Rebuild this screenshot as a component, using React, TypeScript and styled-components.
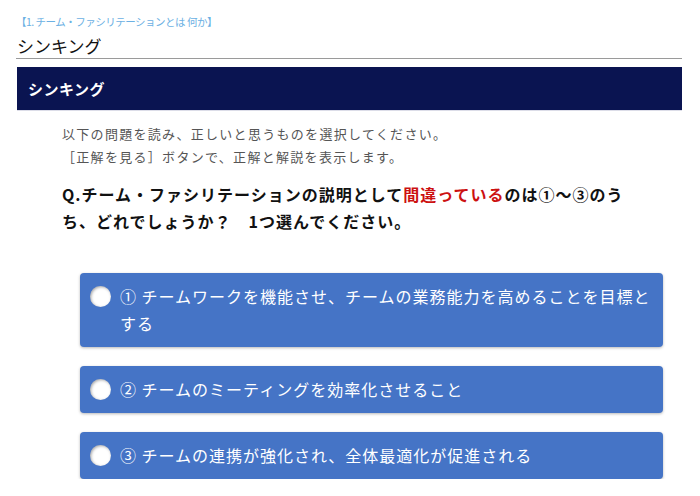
import styled, { createGlobalStyle } from 'styled-components';

const jp = `"Noto Sans CJK JP", "Noto Sans", sans-serif`;

const GlobalStyle = createGlobalStyle`
  html, body {
    margin: 0;
    padding: 0;
    background: #ffffff;
    font-family: ${jp};
  }
`;

const Page = styled.div`
  width: 700px;
  box-sizing: border-box;
  padding: 15px 18px 0 17px;
`;

const Breadcrumb = styled.div`
  margin-left: -1px;
  font-size: 10.5px;
  line-height: 14px;
  letter-spacing: -0.5px;
  color: #6bb0e3;
`;

const Title = styled.h1`
  margin: 5px 0 0 -1px;
  padding-left: 1px;
  font-size: 17px;
  line-height: 24px;
  font-weight: 400;
  color: #111;
  border-bottom: 1px solid #9a9a9a;
`;

const SectionBar = styled.div`
  margin-top: 8px;
  height: 43px;
  display: flex;
  align-items: center;
  padding-left: 11px;
  background: #0a1451;
  border-bottom: 1px solid #dcdde8;
  color: #ffffff;
  font-size: 15px;
  font-weight: 700;
  letter-spacing: 0.5px;
`;

const Body = styled.div`
  padding: 11px 0 0 45px;
`;

const Lead = styled.p`
  margin: 0;
  font-size: 13px;
  line-height: 23px;
  letter-spacing: 1.3px;
  color: #555;
`;

const Question = styled.p`
  max-width: 566px;
  margin: 13px 0 0;
  font-size: 16px;
  line-height: 27px;
  font-weight: 700;
  letter-spacing: 1px;
  color: #111;
`;

const Wrong = styled.span`
  color: #cc1111;
`;

const Options = styled.div`
  display: flex;
  flex-direction: column;
  gap: 19px;
  margin: 38px 19px 0 63px;
`;

const Option = styled.label`
  display: flex;
  align-items: flex-start;
  gap: 9px;
  padding: 10px 12px 10px 10px;
  background: #4574c6;
  border-radius: 4px;
  box-shadow: 0 1px 3px rgba(0, 0, 0, 0.28);
  color: #ffffff;
  font-size: 16px;
  line-height: 27px;
  letter-spacing: 1px;
  cursor: pointer;
`;

const Radio = styled.span`
  flex: none;
  width: 21px;
  height: 21px;
  margin-top: 3px;
  border-radius: 50%;
  background: #ffffff;
  box-shadow: inset 1px 1px 3px rgba(0, 0, 0, 0.35);
`;

const options = [
  '① チームワークを機能させ、チームの業務能力を高めることを目標とする',
  '② チームのミーティングを効率化させること',
  '③ チームの連携が強化され、全体最適化が促進される',
];

export default function App() {
  return (
    <>
      <GlobalStyle />
      <Page>
        <Breadcrumb>【1. チーム・ファシリテーションとは 何か】</Breadcrumb>
        <Title>シンキング</Title>
        <SectionBar>シンキング</SectionBar>
        <Body>
          <Lead>
            以下の問題を読み、正しいと思うものを選択してください。
            <br />
            ［正解を見る］ボタンで、正解と解説を表示します。
          </Lead>
          <Question>
            Q.チーム・ファシリテーションの説明として<Wrong>間違っている</Wrong>のは①〜③のうち、どれでしょうか？　1つ選んでください。
          </Question>
        </Body>
        <Options>
          {options.map((text) => (
            <Option key={text}>
              <Radio />
              <span>{text}</span>
            </Option>
          ))}
        </Options>
      </Page>
    </>
  );
}
